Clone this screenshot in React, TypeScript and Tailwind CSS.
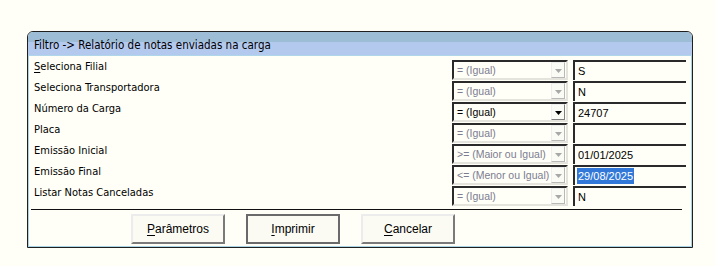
const rows = [
  { label: "Seleciona Filial", ul: 0, op: "= (Igual)", on: false, value: "S" },
  { label: "Seleciona Transportadora", ul: -1, op: "= (Igual)", on: false, value: "N" },
  { label: "Número da Carga", ul: -1, op: "= (Igual)", on: true, value: "24707" },
  { label: "Placa", ul: -1, op: "= (Igual)", on: false, value: "" },
  { label: "Emissão Inicial", ul: -1, op: ">= (Maior ou Igual)", on: false, value: "01/01/2025" },
  { label: "Emissão Final", ul: -1, op: "<= (Menor ou Igual)", on: false, value: "29/08/2025", sel: true },
  { label: "Listar Notas Canceladas", ul: -1, op: "= (Igual)", on: false, value: "N" },
];

const Label = ({ text, ul }: { text: string; ul: number }) => {
  if (ul < 0) return <span>{text}</span>;
  return (
    <span>
      <span className="underline underline-offset-2">{text[ul]}</span>
      {text.slice(ul + 1)}
    </span>
  );
};

const Combo = ({ op, on }: { op: string; on: boolean }) => {
  return (
    <div className="w-[116px] h-[20px] flex items-center border-2 border-t-[#2a2a2a] border-l-[#2a2a2a] border-b-[#e4e4dc] border-r-[#e4e4dc] bg-[#fffff7]">
      <span
        className={
          "flex-1 pl-[3px] text-[10.5px] leading-[16px] whitespace-nowrap overflow-hidden " +
          (on ? "text-black" : "text-[#7c7c92]")
        }
      >
        {op}
      </span>
      <div
        className={
          "w-[14px] h-[16px] mr-[1px] flex items-center justify-center border bg-[#fbfbf6] " +
          (on
            ? "border-t-[#f0f0f0] border-l-[#f0f0f0] border-b-[#808080] border-r-[#808080]"
            : "border-t-[#eeeeee] border-l-[#eeeeee] border-b-[#b8b8b8] border-r-[#b8b8b8]")
        }
      >
        <svg width="7" height="4" viewBox="0 0 7 4" className="mt-[2px]">
          <path d="M0 0H7L3.5 4Z" fill={on ? "#000" : "#a8a8a8"} />
        </svg>
      </div>
    </div>
  );
};

const Edit = ({ value, sel }: { value: string; sel?: boolean }) => {
  return (
    <div className="w-[113px] h-[20px] flex items-center border-t-2 border-l-2 border-[#2a2a2a] pl-[2px] text-[11px] leading-[16px] text-black">
      {sel ? (
        <span className="bg-[#3178d8] text-white px-[1px]">{value}</span>
      ) : (
        <span className="px-[1px]">{value}</span>
      )}
    </div>
  );
};

const Btn = ({ text, def }: { text: string; def?: boolean }) => {
  return (
    <button
      className={
        "w-[94px] h-[30px] bg-[#fbfbf4] text-[12px] text-black border-2 " +
        (def
          ? "border-[#6a6a6a]"
          : "border-t-[#ececec] border-l-[#ececec] border-b-[#7a7a7a] border-r-[#7a7a7a]")
      }
    >
      <span className="underline underline-offset-2">{text[0]}</span>
      {text.slice(1)}
    </button>
  );
};

export default function App() {
  return (
    <div className="w-[715px] h-[266px] bg-[#fffff7] pt-[31px] pl-[27px] font-['Liberation_Sans',Arial,sans-serif]">
      <div className="w-[666px] h-[217px] border border-[#202020] rounded-t-[6px] overflow-hidden flex flex-col">
        <div className="h-[24px] flex flex-col">
          <div className="h-[10px] bg-[#9dbdd6]" />
          <div className="flex-1 bg-[#b4c9ee] border-b border-[#b0d6ea]" />
          <div className="-mt-[21px] h-[21px] pl-[6px] text-[11.5px] leading-[20px] text-black font-['DejaVu_Sans_Condensed','DejaVu_Sans',sans-serif]">
            Filtro -&gt; Relatório de notas enviadas na carga
          </div>
        </div>
        <div className="flex-1 flex flex-col border-x border-b border-[#a8d4e6] pl-[5px] pr-[5px] pt-[4px]">
          <div className="flex flex-col gap-[1px]">
            {rows.map((r) => (
              <div key={r.label} className="flex h-[20px]">
                <div className="w-[418px] text-[11px] leading-[13px] text-black font-['DejaVu_Sans_Condensed','DejaVu_Sans',sans-serif]">
                  <Label text={r.label} ul={r.ul} />
                </div>
                <Combo op={r.op} on={r.on} />
                <div className="w-[5px]" />
                <Edit value={r.value} sel={r.sel} />
              </div>
            ))}
          </div>
          <div className="mt-[3px] -ml-[3px] w-[651px] h-[1px] bg-[#111]" />
          <div className="mt-[4px] pl-[97px] flex gap-[21px]">
            <Btn text="Parâmetros" />
            <Btn text="Imprimir" def />
            <Btn text="Cancelar" />
          </div>
        </div>
      </div>
    </div>
  );
}
